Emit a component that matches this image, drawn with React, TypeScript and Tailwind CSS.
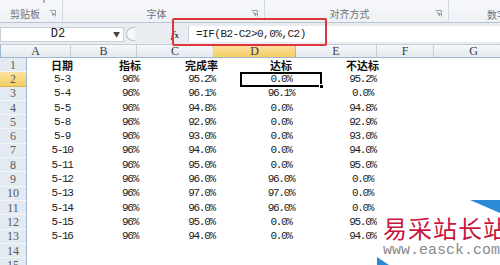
import React from "react";

const cols = [
  { k: "A", w: 70 },
  { k: "B", w: 66 },
  { k: "C", w: 77 },
  { k: "D", w: 82 },
  { k: "E", w: 81 },
  { k: "F", w: 57 },
  { k: "G", w: 80 },
];

const rows: string[][] = [
  ["日期", "指标", "完成率", "达标", "不达标"],
  ["5-3", "96%", "95.2%", "0.0%", "95.2%"],
  ["5-4", "96%", "96.1%", "96.1%", "0.0%"],
  ["5-5", "96%", "94.8%", "0.0%", "94.8%"],
  ["5-8", "96%", "92.9%", "0.0%", "92.9%"],
  ["5-9", "96%", "93.0%", "0.0%", "93.0%"],
  ["5-10", "96%", "94.0%", "0.0%", "94.0%"],
  ["5-11", "96%", "95.0%", "0.0%", "95.0%"],
  ["5-12", "96%", "96.0%", "96.0%", "0.0%"],
  ["5-13", "96%", "97.0%", "97.0%", "0.0%"],
  ["5-14", "96%", "96.0%", "96.0%", "0.0%"],
  ["5-15", "96%", "95.0%", "0.0%", "95.0%"],
  ["5-16", "96%", "94.0%", "0.0%", "94.0%"],
  [],
  [],
];

const mono = { fontFamily: '"Liberation Mono", "Noto Sans CJK SC", monospace' };
const serif = { fontFamily: '"Liberation Serif", serif' };

function Launcher() {
  return (
    <svg width="7" height="7" viewBox="0 0 7 7" className="shrink-0">
      <path d="M0.5 0.5h6v6" fill="none" stroke="#9aa3ad" strokeWidth="1" />
      <path d="M2 2l3 3M3 5h2V3" fill="none" stroke="#7d8792" strokeWidth="1" />
    </svg>
  );
}

function Ribbon() {
  const groups = [
    { label: "剪贴板", w: 63 },
    { label: "字体", w: 202 },
    { label: "对齐方式", w: 184 },
  ];
  return (
    <div className="h-[23px] flex bg-gradient-to-b from-[#f7f8fa] to-[#eef1f5] border-b border-[#b8c3d1]">
      {groups.map((g) => (
        <div
          key={g.label}
          className="relative h-[21px] border-r border-[#d3d9e1] flex items-end pb-[2px]"
          style={{ width: g.w }}
        >
          <div
            className={`flex-1 flex pr-[14px] ${
              g.label === "剪贴板" ? "justify-start pl-[10px]" : "justify-center"
            }`}
          >
            <span className="text-[10px] leading-none text-[#6e747b]">{g.label}</span>
          </div>
          <div className="absolute right-[6px] bottom-[4px]">
            <Launcher />
          </div>
        </div>
      ))}
      <div className="flex-1 flex items-end pb-[2px] pl-[38px] overflow-hidden">
        <span className="text-[10px] leading-none text-[#6e747b] whitespace-nowrap">数字</span>
      </div>
      <div className="absolute left-[43px] top-0 w-[2px] h-[3px] bg-[#b0b6bd]" />
    </div>
  );
}

function FormulaBar() {
  return (
    <div className="h-[22px] flex items-center bg-[#e9edf2] border-b border-[#c5ccd6] pt-[1px]">
      <div className="w-[124px] h-[15px] bg-white border border-[#c8cfd8] flex items-center relative">
        <span className="flex-1 text-center text-[12px] leading-none text-[#222] pr-[8px]" style={mono}>
          D2
        </span>
        <span className="absolute right-[3px] text-[7px] text-[#444]">▼</span>
      </div>
      <div className="w-[9px] h-[14px] ml-[2px] rounded-l-full border border-r-0 border-[#b9c0c9] bg-[#f4f6f8]" />
      <div className="flex-1 flex items-center h-full pl-[36px]">
        <span className="italic text-[11px] text-[#333] font-bold w-[14px]" style={serif}>
          f<span className="text-[8px] not-italic">x</span>
        </span>
        <div className="flex-1 h-[16px] ml-[3px] bg-white border-l border-[#c8cfd8] flex items-center pl-[7px]">
          <span className="text-[11px] leading-none text-[#222] tracking-[-0.5px]" style={mono}>
            =IF(B2-C2&gt;0,0%,C2)
          </span>
        </div>
      </div>
    </div>
  );
}

function ColumnHeader() {
  return (
    <div className="h-[13px] flex border-b border-[#9eb6ce]">
      <div className="w-[27px] h-full bg-gradient-to-b from-[#f3f5f8] to-[#e2e7ee] border-r border-[#9eb6ce] relative">
        <div className="absolute right-[2px] bottom-[2px] w-0 h-0 border-l-[6px] border-l-transparent border-b-[6px] border-b-[#c4cad2]" />
      </div>
      {cols.map((c) => (
        <div
          key={c.k}
          className={`h-full shrink-0 flex items-center justify-center border-r ${
            c.k === "D"
              ? "bg-gradient-to-b from-[#fbe3a1] to-[#f5cd63] border-[#e0b04c]"
              : "bg-gradient-to-b from-[#f6f8fa] to-[#e4e9ef] border-[#c5cfdb]"
          }`}
          style={{ width: c.w }}
        >
          <span className="text-[12px] leading-none text-[#3c3c3c]" style={serif}>
            {c.k}
          </span>
        </div>
      ))}
    </div>
  );
}

function Grid() {
  return (
    <div className="flex flex-col">
      {rows.map((r, i) => {
        const n = i + 1;
        const header = n === 1;
        return (
          <div key={n} className="h-[14.3px] flex shrink-0">
            <div
              className={`w-[27px] shrink-0 flex items-center justify-center border-r border-b ${
                n === 2
                  ? "bg-gradient-to-b from-[#fbe3a1] to-[#f5cd63] border-r-[#9eb6ce] border-b-[#e0b04c]"
                  : "bg-[#e4eaf2] border-r-[#9eb6ce] border-b-[#f2f5f9]"
              }`}
            >
              <span className="text-[12px] leading-none text-[#5a5a5a]" style={serif}>
                {n}
              </span>
            </div>
            {cols.map((c, j) => {
              const v = r[j] ?? "";
              const active = n === 2 && c.k === "D";
              return (
                <div
                  key={c.k}
                  className={`shrink-0 flex items-center justify-center relative ${
                    active ? "border-2 border-black" : ""
                  }`}
                  style={{ width: c.w }}
                >
                  {header ? (
                    <span className="text-[11px] leading-none font-bold text-[#111]">{v}</span>
                  ) : (
                    <span className="text-[11px] leading-none text-[#222] tracking-[-1.3px]" style={mono}>
                      {v}
                    </span>
                  )}
                  {active && (
                    <div className="absolute right-[-4px] bottom-[-4px] w-[5px] h-[5px] bg-black border border-white" />
                  )}
                </div>
              );
            })}
          </div>
        );
      })}
    </div>
  );
}

function Watermark() {
  return (
    <div className="absolute left-[377px] top-[200px] w-[123px] h-[65px] bg-white overflow-hidden">
      <div className="absolute right-0 top-0 w-0 h-0 border-l-[30px] border-l-transparent border-t-[13px] border-t-[#2a8ad8]" />
      <div className="absolute left-0 bottom-0 w-0 h-0 border-r-[12px] border-r-transparent border-b-[8px] border-b-[#2a8ad8]" />
      <div
        className="absolute left-[6px] top-[16px] whitespace-nowrap text-[24px] leading-none tracking-[1px] text-[#c8163c]"
        style={{ fontFamily: '"Noto Sans CJK SC", serif' }}
      >
        易采站长站
      </div>
      <div className="absolute left-[6px] top-[43px] whitespace-nowrap text-[15px] leading-none text-[#8a8a8a]" style={mono}>
        www.easck.com
      </div>
    </div>
  );
}

export default function App() {
  return (
    <div
      className="w-[500px] h-[265px] overflow-hidden bg-white relative"
      style={{ fontFamily: '"Noto Sans CJK SC", sans-serif' }}
    >
      <Ribbon />
      <FormulaBar />
      <ColumnHeader />
      <Grid />
      {/* red annotation box around the formula */}
      <div className="absolute left-[172px] top-[18px] w-[155px] h-[28px] border-[2.5px] border-[#e0353b] rounded-[2px]" />
      <Watermark />
    </div>
  );
}
